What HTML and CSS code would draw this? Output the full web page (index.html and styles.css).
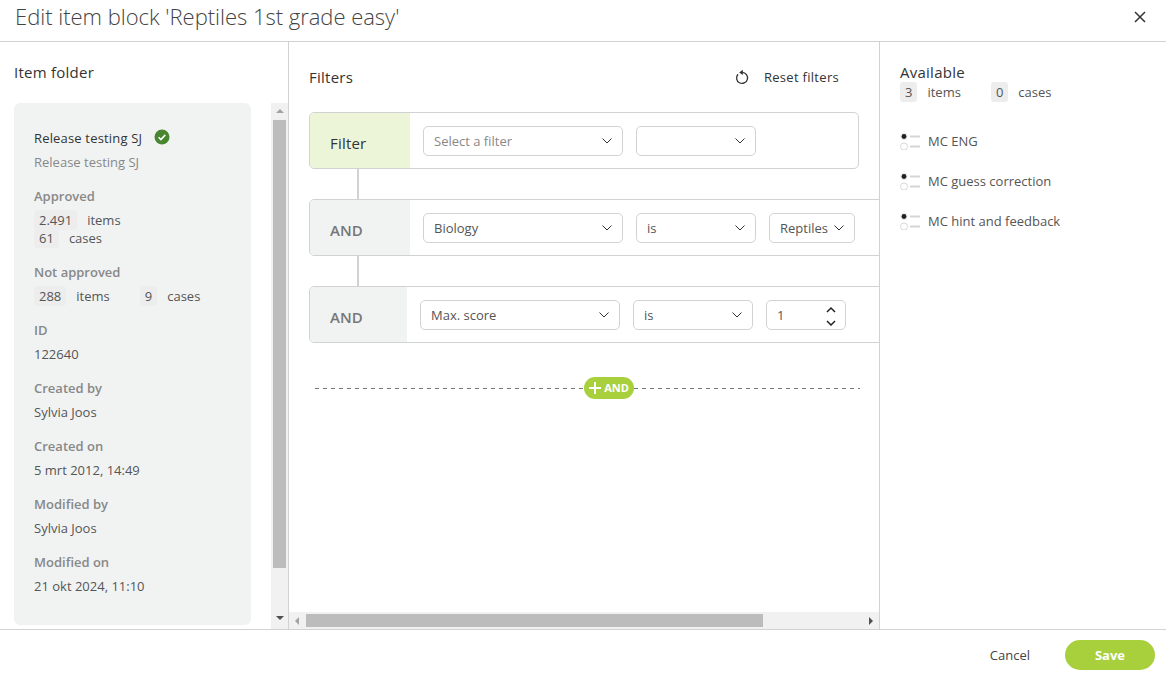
FILE: index.html
```html
<!DOCTYPE html>
<html lang="en">
<head>
<meta charset="utf-8">
<title>Edit item block</title>
<link rel="stylesheet" href="styles.css">
</head>
<body>
<div class="dialog">
  <header class="top">
    <h1 class="title">Edit item block 'Reptiles 1st grade easy'</h1>
    <svg class="close" width="12" height="12" viewBox="0 0 12 12"><path d="M1 1l10 10M11 1L1 11" stroke="#333" stroke-width="1.5" fill="none"/></svg>
  </header>
  <main class="body">
    <aside class="left">
      <h2 class="heading left-heading">Item folder</h2>
      <div class="left-main">
        <div class="card">
          <div class="name-row"><span class="name">Release testing SJ</span>
            <svg width="16" height="16" viewBox="0 0 16 16"><circle cx="8" cy="8" r="7.5" fill="#48862f"/><path d="M4.6 8.2l2.3 2.3 4.4-4.6" stroke="#fff" stroke-width="1.6" fill="none"/></svg>
          </div>
          <div class="sub">Release testing SJ</div>
          <div class="label">Approved</div>
          <div class="stats tight"><span class="badge">2.491</span><span>items</span></div>
          <div class="stats"><span class="badge">61</span><span>cases</span></div>
          <div class="label">Not approved</div>
          <div class="stats"><span class="badge">288</span><span class="unit">items</span><span class="badge">9</span><span>cases</span></div>
          <div class="label">ID</div>
          <div class="value">122640</div>
          <div class="label">Created by</div>
          <div class="value">Sylvia Joos</div>
          <div class="label">Created on</div>
          <div class="value">5 mrt 2012, 14:49</div>
          <div class="label">Modified by</div>
          <div class="value">Sylvia Joos</div>
          <div class="label">Modified on</div>
          <div class="value">21 okt 2024, 11:10</div>
        </div>
        <div class="vscroll">
          <span class="arrow-up"></span>
          <div class="vthumb"></div>
          <span class="arrow-down"></span>
        </div>
      </div>
    </aside>
    <section class="center">
      <div class="canvas">
        <div class="filters-head">
          <h2 class="heading">Filters</h2>
          <div class="reset">
            <svg width="16" height="16" viewBox="0 0 16 16"><path d="M4 5.200A5.500 5.500 0 1 0 8.200 3.400" stroke="#333" stroke-width="1.300" fill="none"/><path d="M8.800 0.800L5.200 3.400l3.600 2.600z" fill="#333"/></svg>
            <span>Reset filters</span>
          </div>
        </div>
        <div class="row row-first">
          <div class="row-label label-filter">Filter</div>
          <div class="select w200 placeholder"><span>Select a filter</span><svg class="chev" width="10" height="6" viewBox="0 0 10 6"><path d="M.5.5L5 5 9.500.5" stroke="#333" fill="none"/></svg></div>
          <div class="select w120"><span></span><svg class="chev" width="10" height="6" viewBox="0 0 10 6"><path d="M.5.5L5 5 9.500.5" stroke="#333" fill="none"/></svg></div>
        </div>
        <div class="connector"></div>
        <div class="row row-wide">
          <div class="row-label">AND</div>
          <div class="select w200"><span>Biology</span><svg class="chev" width="10" height="6" viewBox="0 0 10 6"><path d="M.5.5L5 5 9.500.5" stroke="#333" fill="none"/></svg></div>
          <div class="select w120"><span>is</span><svg class="chev" width="10" height="6" viewBox="0 0 10 6"><path d="M.5.5L5 5 9.500.5" stroke="#333" fill="none"/></svg></div>
          <div class="select w86"><span>Reptiles</span><svg class="chev" width="10" height="6" viewBox="0 0 10 6"><path d="M.5.5L5 5 9.500.5" stroke="#333" fill="none"/></svg></div>
        </div>
        <div class="connector"></div>
        <div class="row row-wide">
          <div class="row-label narrow">AND</div>
          <div class="select w200"><span>Max. score</span><svg class="chev" width="10" height="6" viewBox="0 0 10 6"><path d="M.5.5L5 5 9.500.5" stroke="#333" fill="none"/></svg></div>
          <div class="select w120"><span>is</span><svg class="chev" width="10" height="6" viewBox="0 0 10 6"><path d="M.5.5L5 5 9.500.5" stroke="#333" fill="none"/></svg></div>
          <div class="select w80"><span>1</span>
            <svg class="spin" width="10" height="22" viewBox="0 0 10 22"><path d="M1 8l4-4 4 4M1 17l4 4 4-4" stroke="#222" stroke-width="1.500" fill="none"/></svg>
          </div>
        </div>
        <div class="add-line">
          <div class="dash dash-left"></div>
          <div class="add-btn"><svg width="12" height="12" viewBox="0 0 12 12"><path d="M6 0v12M0 6h12" stroke="#fff" stroke-width="2"/></svg><span class="add-text">AND</span></div>
          <div class="dash"></div>
        </div>
      </div>
      <div class="hscroll">
        <span class="arrow-left"></span>
        <div class="hthumb"></div>
        <span class="arrow-right"></span>
      </div>
    </section>
    <aside class="right">
      <h2 class="heading available">Available</h2>
      <div class="stats"><span class="badge">3</span><span class="unit">items</span><span class="badge">0</span><span>cases</span></div>
      <ul class="items">
        <li class="item"><svg width="20" height="17" viewBox="0 0 20 17"><circle cx="4" cy="3.500" r="3.500" fill="#e8e8e8"/><circle cx="4" cy="3.500" r="2.400" fill="#222"/><circle cx="4" cy="13.500" r="3.500" fill="#fff" stroke="#d8d8d8"/><path d="M10 3.500h10M10 13.500h10" stroke="#d5d5d5" stroke-width="2"/></svg><span>MC ENG</span></li>
        <li class="item"><svg width="20" height="17" viewBox="0 0 20 17"><circle cx="4" cy="3.500" r="3.500" fill="#e8e8e8"/><circle cx="4" cy="3.500" r="2.400" fill="#222"/><circle cx="4" cy="13.500" r="3.500" fill="#fff" stroke="#d8d8d8"/><path d="M10 3.500h10M10 13.500h10" stroke="#d5d5d5" stroke-width="2"/></svg><span>MC guess correction</span></li>
        <li class="item"><svg width="20" height="17" viewBox="0 0 20 17"><circle cx="4" cy="3.500" r="3.500" fill="#e8e8e8"/><circle cx="4" cy="3.500" r="2.400" fill="#222"/><circle cx="4" cy="13.500" r="3.500" fill="#fff" stroke="#d8d8d8"/><path d="M10 3.500h10M10 13.500h10" stroke="#d5d5d5" stroke-width="2"/></svg><span>MC hint and feedback</span></li>
      </ul>
    </aside>
  </main>
  <footer class="bottom">
    <span class="cancel">Cancel</span>
    <span class="save">Save</span>
  </footer>
</div>
</body>
</html>
```
FILE: styles.css
```css
* { box-sizing: border-box; }
html, body { margin: 0; height: 100%; }
body { font-family: "Open Sans", "Liberation Sans", sans-serif; font-size: 13px; color: #555; background: #fff; overflow: hidden; }
.dialog { height: 675px; display: flex; flex-direction: column; }
.top { height: 42px; flex: none; display: flex; align-items: center; justify-content: space-between; padding: 0 20px 8px 15px; border-bottom: 1px solid #d2d2d2; }
.title { margin: 0 0 2px; font-size: 22px; font-weight: 300; color: #444; line-height: 34px; letter-spacing: -0.02px; }
.close { display: block; }
.body { flex: 1; min-height: 0; display: flex; }
.heading { margin: 0; font-size: 15px; font-weight: 500; color: #333; line-height: 20px; letter-spacing: 0.25px; }
.left { width: 289px; flex: none; border-right: 1px solid #d2d2d2; display: flex; flex-direction: column; }
.left-heading { padding: 20px 0 0 14px; height: 61px; }
.left-main { flex: 1; min-height: 0; display: flex; padding-left: 14px; }
.card { width: 237px; height: 522px; background: #f1f3f3; border-radius: 6px; padding: 24px 20px 0; }
.name-row { display: flex; align-items: center; gap: 12px; height: 20px; }
.name { font-weight: 500; color: #333; letter-spacing: 0.17px; margin-top: 1px; }
.sub { margin-top: 5px; line-height: 20px; color: #888; }
.label { margin-top: 14px; line-height: 20px; font-weight: 600; color: #888; }
.value { margin-top: 4px; line-height: 20px; color: #555; }
.stats { display: flex; align-items: center; height: 20px; margin-top: 4px; }
.stats.tight + .stats { margin-top: -2px; }
.badge { background: #ededed; border-radius: 3px; padding: 0 5px; line-height: 20px; height: 20px; margin-right: 10px; }
.unit { margin-right: 30px; }
.vscroll { width: 17px; margin-left: 20px; background: #f1f1f1; display: flex; flex-direction: column; align-items: center; }
.arrow-up { width: 0; height: 0; margin: 6px 0 5px; border: 4px solid transparent; border-top: 0; border-bottom: 4px solid #a3a3a3; flex: none; }
.vthumb { width: 13px; height: 448px; background: #bcbcbc; margin-top: 2px; flex: none; }
.arrow-down { width: 0; height: 0; margin-top: 48px; border: 4px solid transparent; border-bottom: 0; border-top: 4px solid #505050; flex: none; }
.center { width: 591px; flex: none; border-right: 1px solid #d2d2d2; display: flex; flex-direction: column; min-width: 0; }
.canvas { flex: 1; min-height: 0; overflow: hidden; padding: 0 0 0 20px; }
.filters-head { width: 530px; height: 70px; display: flex; align-items: flex-start; justify-content: space-between; padding-top: 25px; }
.reset { display: flex; align-items: center; gap: 14px; color: #333; font-weight: 500; line-height: 20px; font-size: 13px; letter-spacing: 0.3px; }
.reset svg { display: block; }
.row { height: 57px; display: flex; align-items: flex-start; gap: 13px; border: 1px solid #d2d2d2; border-radius: 5px; flex: none; }
.row-first { width: 550px; }
.row-wide { width: 700px; }
.row-label { width: 100px; height: 100%; flex: none; background: #f1f3f3; padding: 19px 0 0 20px; font-size: 15px; font-weight: 600; color: #777; line-height: 22px; border-radius: 4px 0 0 4px; }
.row-label.narrow { width: 97px; }
.label-filter { background: #ecf5d8; color: #333; font-weight: 500; letter-spacing: 0.2px; }
.select { height: 30px; margin-top: 13px; border: 1px solid #d2d2d2; border-radius: 5px; display: flex; align-items: center; justify-content: space-between; padding: 0 10px; flex: none; color: #555; background: #fff; }
.select .chev { display: block; }
.w200 { width: 200px; }
.w120 { width: 120px; }
.w86 { width: 86px; }
.w80 { width: 80px; }
.placeholder { color: #888; }
.spin { margin-right: -1px; }
.connector { width: 2px; height: 30px; margin-left: 48px; background: #d2d2d2; }
.add-line { width: 545px; margin: 34px 0 0 6px; display: flex; align-items: center; height: 22px; }
.dash { flex: 1; height: 1px; background: repeating-linear-gradient(90deg, #777 0 4px, transparent 4px 8px); }
.dash-left { flex: none; width: 269px; }
.add-btn { width: 50px; height: 22px; flex: none; background: #a8d03c; border-radius: 11px; display: flex; align-items: center; justify-content: center; gap: 3px; color: #fff; font-size: 11px; font-weight: 700; }
.add-text { line-height: 14px; }
.hscroll { height: 17px; flex: none; background: #f1f1f1; display: flex; align-items: center; }
.arrow-left { width: 0; height: 0; margin-left: 6px; border: 4px solid transparent; border-left: 0; border-right: 4px solid #a3a3a3; flex: none; }
.hthumb { width: 457px; height: 13px; margin-left: 7px; background: #bcbcbc; flex: none; }
.arrow-right { width: 0; height: 0; margin-left: auto; margin-right: 6px; border: 4px solid transparent; border-right: 0; border-left: 4px solid #505050; flex: none; }
.right { flex: 1; padding: 20px 0 0 20px; }
.available { margin-bottom: 0; }
.right .stats { margin-top: 0; }
.items { list-style: none; margin: 19px 0 0; padding: 0; }
.item { height: 40px; display: flex; align-items: center; gap: 8px; color: #555; }
.item svg { display: block; }
.bottom { height: 46px; flex: none; border-top: 1px solid #d2d2d2; display: flex; align-items: center; justify-content: flex-end; gap: 35px; padding: 4px 11px 0 0; }
.cancel { color: #444; font-weight: 500; }
.save { width: 90px; height: 30px; border-radius: 15px; background: #a8d03c; color: #fff; font-weight: 700; text-align: center; line-height: 30px; }
```
